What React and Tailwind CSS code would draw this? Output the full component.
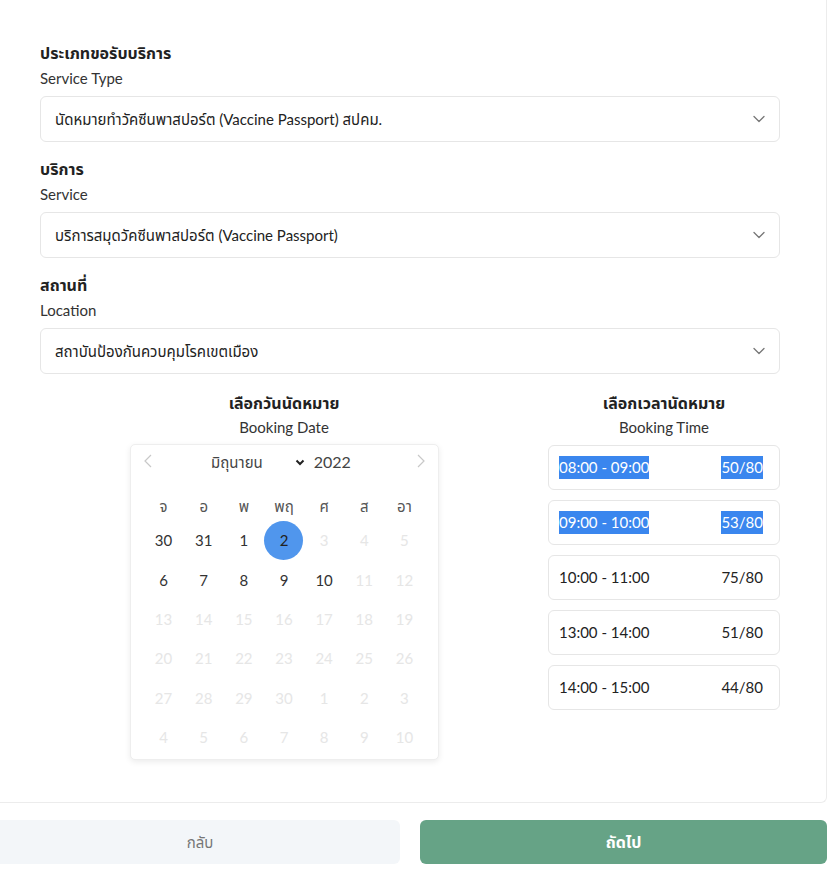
import React from "react";

const font = { fontFamily: "Lato, 'Noto Sans', 'Noto Sans Thai', sans-serif" };

function Chevron({ className = "" }) {
  return (
    <svg className={className} width="12" height="8" viewBox="0 0 12 8" fill="none">
      <path d="M1 1.5L6 6.5L11 1.5" stroke="#777" strokeWidth="1.3" strokeLinecap="round" strokeLinejoin="round" />
    </svg>
  );
}

function Field({ th, en, value }) {
  return (
    <div className="flex flex-col">
      <div className="text-[16px] font-bold leading-[22px] text-[#222]">{th}</div>
      <div className="mt-[3px] text-[15px] leading-[22px] text-[#333]">{en}</div>
      <div className="mt-[7px] flex h-[46px] items-center justify-between rounded-[6px] border border-[#e6e6e6] bg-white pl-[14px] pr-[14px]">
        <span className="text-[15px] text-[#222]">{value}</span>
        <Chevron />
      </div>
    </div>
  );
}

const weekdays = ["จ", "อ", "พ", "พฤ", "ศ", "ส", "อา"];
const rows = [
  [[30, 1], [31, 1], [1, 1], [2, 2], [3, 0], [4, 0], [5, 0]],
  [[6, 1], [7, 1], [8, 1], [9, 1], [10, 1], [11, 0], [12, 0]],
  [[13, 0], [14, 0], [15, 0], [16, 0], [17, 0], [18, 0], [19, 0]],
  [[20, 0], [21, 0], [22, 0], [23, 0], [24, 0], [25, 0], [26, 0]],
  [[27, 0], [28, 0], [29, 0], [30, 0], [1, 0], [2, 0], [3, 0]],
  [[4, 0], [5, 0], [6, 0], [7, 0], [8, 0], [9, 0], [10, 0]],
];

const slots = [
  ["08:00 - 09:00", "50/80", true],
  ["09:00 - 10:00", "53/80", true],
  ["10:00 - 11:00", "75/80", false],
  ["13:00 - 14:00", "51/80", false],
  ["14:00 - 15:00", "44/80", false],
];

function Calendar() {
  return (
    <div className="w-[309px] rounded-[5px] border border-[#eeeeee] bg-white px-[13px] pb-[2px] shadow-[0_2px_6px_rgba(0,0,0,0.08)]">
      <div className="relative flex h-[34px] items-center justify-center">
        <svg className="absolute left-[0px] top-[9px]" width="8" height="14" viewBox="0 0 8 14" fill="none">
          <path d="M7 1L1 7L7 13" stroke="#c8c8c8" strokeWidth="1.2" />
        </svg>
        <div className="flex items-center text-[15px] text-[#444]">
          <span className="ml-[-6px] mr-[32px]">มิถุนายน</span>
          <svg width="10" height="7" viewBox="0 0 10 7" fill="none" className="mr-[9px]">
            <path d="M1.5 1.5L5 5L8.5 1.5" stroke="#222" strokeWidth="2" />
          </svg>
          <span className="text-[16px]">2022</span>
        </div>
        <svg className="absolute right-[0px] top-[9px]" width="8" height="14" viewBox="0 0 8 14" fill="none">
          <path d="M1 1L7 7L1 13" stroke="#c8c8c8" strokeWidth="1.2" />
        </svg>
      </div>
      <div className="mt-[12px] grid h-[30px] grid-cols-7 items-center text-center text-[15px] text-[#555]">
        {weekdays.map((w) => (
          <div key={w}>{w}</div>
        ))}
      </div>
      {rows.map((r, i) => (
        <div key={i} className="grid h-[39.3px] grid-cols-7 items-center text-center text-[15px]">
          {r.map(([d, s], j) => (
            <div key={j} className="flex items-center justify-center">
              {s === 2 ? (
                <span className="flex h-[39px] w-[39px] items-center justify-center rounded-full bg-[#5096ed] text-[#222]">{d}</span>
              ) : (
                <span className={s === 1 ? "text-[#333]" : "text-[#e6e6e6]"}>{d}</span>
              )}
            </div>
          ))}
        </div>
      ))}
    </div>
  );
}

export default function App() {
  return (
    <div className="min-h-[879px] w-[835px] bg-white" style={font}>
      <div className="w-[827px] rounded-br-[6px] border-r border-b border-[#ececec] bg-white pb-[42px] pl-[40px] pr-[46px] pt-[42px]">
        <div className="flex flex-col gap-[16px]">
          <Field th="ประเภทขอรับบริการ" en="Service Type" value="นัดหมายทำวัคซีนพาสปอร์ต (Vaccine Passport) สปคม." />
          <Field th="บริการ" en="Service" value="บริการสมุดวัคซีนพาสปอร์ต (Vaccine Passport)" />
          <Field th="สถานที่" en="Location" value="สถาบันป้องกันควบคุมโรคเขตเมือง" />
        </div>
        <div className="mt-[18px] grid grid-cols-[488px_232px] gap-x-[20px]">
          <div className="flex flex-col items-center">
            <div className="text-[16px] font-bold leading-[22px] text-[#222]">เลือกวันนัดหมาย</div>
            <div className="mt-[2px] text-[15px] leading-[22px] text-[#333]">Booking Date</div>
            <div className="mt-[6px]">
              <Calendar />
            </div>
          </div>
          <div className="flex flex-col items-center">
            <div className="text-[16px] font-bold leading-[22px] text-[#222]">เลือกเวลานัดหมาย</div>
            <div className="mt-[2px] text-[15px] leading-[22px] text-[#333]">Booking Time</div>
            <div className="mt-[7px] flex w-full flex-col gap-[10px]">
              {slots.map(([t, c, sel]) => (
                <div key={t} className="flex h-[45px] items-center justify-between rounded-[6px] border border-[#e6e6e6] bg-white pl-[10px] pr-[16px] text-[15px]">
                  <span className={sel ? "bg-[#3a86ee] leading-[23px] text-white" : "text-[#222]"}>{t}</span>
                  <span className={sel ? "bg-[#3a86ee] leading-[23px] text-white" : "text-[#222]"}>{c}</span>
                </div>
              ))}
            </div>
          </div>
        </div>
      </div>
      <div className="mt-[17px] flex w-[827px] gap-[20px]">
        <div className="flex h-[44px] w-[400px] items-center justify-center rounded-r-[6px] bg-[#f3f6f9] text-[15px] text-[#777]">กลับ</div>
        <div className="flex h-[44px] flex-1 items-center justify-center rounded-[6px] bg-[#66a386] text-[16px] font-bold text-white">ถัดไป</div>
      </div>
    </div>
  );
}
